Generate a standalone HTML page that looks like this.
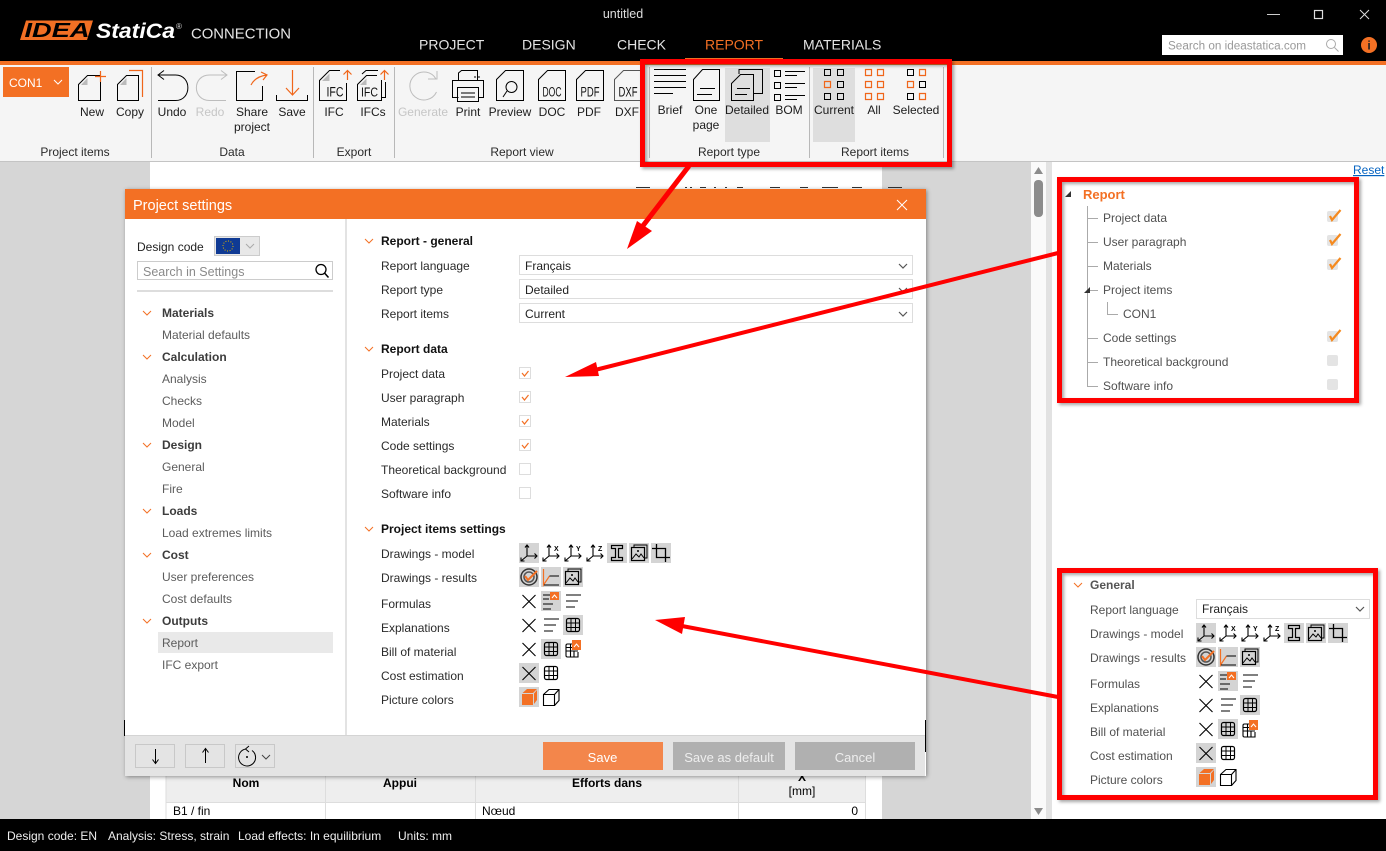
<!DOCTYPE html>
<html lang="en"><head><meta charset="utf-8"><title>IDEA StatiCa Connection</title>
<style>
html,body{margin:0;padding:0;background:#fff;width:1386px;height:851px;overflow:hidden}
svg{display:block;font-family:"Liberation Sans",Arial,sans-serif;font-size:12px}
.l{fill:#2a2a2a}.g{fill:#5c5c5c}.h{fill:#3c3c3c;font-weight:bold}.b{fill:#111;font-weight:bold}.m{text-anchor:middle}
.rb{text-anchor:middle;fill:#1c1c1c}.dis{text-anchor:middle;fill:#c6c6c6}.sec{text-anchor:middle;fill:#2a2a2a}
.p{fill:#505050}.s{fill:none;stroke:#000;stroke-width:1}.o{fill:none;stroke:#f0661a;stroke-width:1.200}.gs{fill:none;stroke:#bdbdbd;stroke-width:1}
.tab{font-size:14px;fill:#e4e4e4}.dt{font-size:13.500px;fill:#111;text-anchor:middle}
.a{fill:#d4d4d4}.chev{fill:none;stroke:#f37024;stroke-width:1}.dd{fill:#fff;stroke:#ddd}.ddc{fill:none;stroke:#555;stroke-width:1.200}
.red{fill:none;stroke:#f00;stroke-width:5}
</style></head><body>
<svg width="1386" height="851" viewBox="0 0 1386 851" xmlns="http://www.w3.org/2000/svg">
<defs>
<filter id="sd" x="-5%" y="-5%" width="110%" height="110%"><feDropShadow dx="1" dy="1" stdDeviation="2" flood-color="#000" flood-opacity=".4"/></filter>
<filter id="rs" x="-5%" y="-5%" width="110%" height="110%"><feDropShadow dx="2" dy="2" stdDeviation="1.500" flood-color="#000" flood-opacity=".35"/></filter>
<symbol id="ax" viewBox="0 0 20 20"><path d="M8 13V2M6 4.500 8 2l2 2.500M8 13H18M15.500 10.500 18 13l-2.500 2.500M8 13 2 18M2 14.500V18H5.500" fill="none" stroke="#000" stroke-width="1.100"/></symbol>
<symbol id="ib" viewBox="0 0 20 20"><path d="M4.500 2.500h11v3h-4v9h4v3h-11v-3h4v-9h-4z" fill="none" stroke="#000" stroke-width="1.200"/></symbol>
<symbol id="im" viewBox="0 0 20 20"><path d="M5 4V2h13v13h-2" fill="none" stroke="#000"/><rect x="2.500" y="4.500" width="13" height="13" fill="none" stroke="#000" stroke-width="1.200"/><path d="M3 16l4-5 3 3 2-3 3 4" fill="none" stroke="#000"/><circle cx="9" cy="8" r="1"/></symbol>
<symbol id="cr" viewBox="0 0 20 20"><path d="M5.500 1V14.500H19M1 5.500H14.500V19" fill="none" stroke="#000" stroke-width="1.300"/></symbol>
<symbol id="tg" viewBox="0 0 20 20"><circle cx="10" cy="10" r="8" fill="none" stroke="#333" stroke-width="1.500"/><circle cx="10" cy="10" r="5" fill="none" stroke="#555" stroke-width="1.500"/><path d="M6 9l3 4 9-9" fill="none" stroke="#f37024" stroke-width="2"/></symbol>
<symbol id="gr" viewBox="0 0 20 20"><path d="M2.500 2V18L8.500 9" fill="none" stroke="#f37024" stroke-width="1.200"/><path d="M8.500 9H18M3 18H18" fill="none" stroke="#000"/></symbol>
<symbol id="fo" viewBox="0 0 20 20"><path d="M2 4h7M2 8h6M2 13h10M2 18h8" fill="none" stroke="#000"/><rect x="9" y="1" width="9" height="8" fill="#f37024"/><path d="M11 7l2.500-3L16 7" fill="none" stroke="#fff"/></symbol>
<symbol id="x" viewBox="0 0 20 20"><path d="M3.500 4 16.500 17M16.500 4 3.500 17" fill="none" stroke="#000" stroke-width="1.100"/></symbol>
<symbol id="li" viewBox="0 0 20 20"><path d="M3 4h15M3 10h12M3 16h9" fill="none" stroke="#000"/></symbol>
<symbol id="gd" viewBox="0 0 20 20"><rect x="3.500" y="3.500" width="13" height="13" rx="2" fill="none" stroke="#000" stroke-width="1.200"/><path d="M8 3.500v13M12.500 3.500v13M3.500 8h13M3.500 12.500h13" fill="none" stroke="#000"/></symbol>
<symbol id="go" viewBox="0 0 20 20"><path d="M9 5H4.500Q3 5 3 6.500V16.500Q3 18 4.500 18H15V13M3 12h12M3 8.500h6M7.500 5v13M11 12v6" fill="none" stroke="#000" stroke-width="1.100"/><rect x="9" y="1" width="9" height="10" fill="#f37024"/><path d="M11 8l2.500-3L16 8" fill="none" stroke="#fff"/></symbol>
<symbol id="co" viewBox="0 0 20 20"><path d="M3 7h11v11H3z" fill="#f37024"/><path d="M3.500 6 8 2h10l-4 4z" fill="#f37024"/><path d="M15 6.500 18 3v10l-3 4z" fill="#f37024"/></symbol>
<symbol id="cw" viewBox="0 0 20 20"><path d="M2.500 7.500h11v11h-11zM2.500 7.500 8 2.500h10v11l-4.500 5M13.500 7.500 18 2.500" fill="none" stroke="#000" stroke-width="1.100"/></symbol>
</defs>

<!-- backgrounds -->
<rect width="1386" height="851" fill="#fff"/>
<rect x="0" y="162" width="1031" height="658" fill="#d6d6d6"/>
<rect x="150" y="162" width="732" height="658" fill="#fff"/>
<rect x="1031" y="162" width="15" height="658" fill="#fafafa"/>
<rect x="1046" y="162" width="6" height="658" fill="#e2e2e2"/>
<path d="M1038.500 167l-4.500 7h9z" fill="#8c8c8c"/><rect x="1034" y="180" width="9" height="37" rx="4" fill="#8c8c8c"/><path d="M1038.500 815l-4.500-7h9z" fill="#8c8c8c"/>

<!-- page behind dialog -->
<path d="M636 187.500h14M685 187.500h2M690 187.500h2M700 187.500h6M714 187.500h2M725 187.500h2M737 187.500h6M770 187.500h10M800 187.500h8M822 187.500h16M852 187.500h10M888 187.500h14" stroke="#333" fill="none"/>
<rect x="124" y="720" width="1" height="16" fill="#000"/>
<rect x="166" y="770" width="700" height="33" fill="#eee"/>
<path d="M166 770V820M325.500 770V820M475.500 770V820M738.500 770V820M865.500 770V820M166 802.500H866" stroke="#ddd" fill="none"/>
<g style="font-weight:bold;fill:#000" text-anchor="middle"><text x="246" y="787">Nom</text><text x="400" y="787">Appui</text><text x="607" y="787">Efforts dans</text><text x="802" y="781">X</text></g>
<text x="802" y="795" text-anchor="middle" fill="#000">[mm]</text>
<text x="173" y="815" fill="#000">B1 / fin</text><text x="482" y="815" fill="#000">Nœud</text><text x="858" y="815" text-anchor="end" fill="#000">0</text>

<!-- top bar -->
<rect width="1386" height="61" fill="#000"/>
<rect y="61" width="1386" height="4" fill="#f37024"/>
<rect x="685" y="58" width="98" height="3" fill="#f37024"/>
<rect y="65" width="1386" height="96" fill="#f5f5f5"/>
<rect y="161" width="1386" height="1" fill="#c4c4c4"/>
<!-- logo -->
<path d="M26 20.500H93L87 40H20Z" fill="#f37024"/>
<text x="24.500" y="37" style="font-size:20px;font-weight:bold;font-style:italic;fill:#000" textLength="65" lengthAdjust="spacingAndGlyphs">IDEA</text>
<text x="96" y="38" style="font-size:21px;font-weight:bold;font-style:italic;fill:#fff" textLength="79" lengthAdjust="spacingAndGlyphs">StatiCa</text>
<text x="176" y="29" style="font-size:8px;fill:#ddd">®</text>
<text x="191" y="38.500" style="font-size:14.500px;fill:#e6e6e6" textLength="100" lengthAdjust="spacingAndGlyphs">CONNECTION</text>
<text x="623" y="18" text-anchor="middle" style="font-size:12.500px;fill:#ddd">untitled</text>
<g class="tabs"><text class="tab" x="419" y="49.500">PROJECT</text><text class="tab" x="522" y="49.500">DESIGN</text><text class="tab" x="617" y="49.500">CHECK</text><text class="tab" x="705" y="49.500" style="fill:#f37024">REPORT</text><text class="tab" x="803" y="49.500">MATERIALS</text></g>
<path d="M1267 14.500h13" stroke="#ccc"/><rect x="1314.500" y="10.500" width="8" height="8" fill="none" stroke="#ddd" stroke-width="1.200"/><path d="M1360 10l9 9M1369 10l-9 9" stroke="#ddd"/>
<rect x="1162" y="35" width="181" height="20" fill="#fff"/>
<text x="1168" y="49.500" style="font-size:11.500px;fill:#999" textLength="138" lengthAdjust="spacingAndGlyphs">Search on ideastatica.com</text>
<circle cx="1331" cy="44" r="4.500" fill="none" stroke="#aaa"/><path d="M1334.500 47.500l4 4" stroke="#aaa"/>
<circle cx="1369" cy="45" r="8" fill="#f37024"/><text x="1369" y="49.500" text-anchor="middle" style="font-weight:bold;fill:#222">i</text>

<!-- ribbon -->
<rect x="3" y="67" width="66" height="30" fill="#f37024"/>
<text x="9" y="87" style="fill:#fff">CON1</text><path d="M54 80l4 4 4-4" fill="none" stroke="#fff"/>
<path d="M151.500 67V158M313.500 67V158M394.500 67V158M649.500 67V158M809.500 67V158M943.500 67V158" stroke="#b8b8b8" fill="none"/>
<rect x="725" y="68" width="45" height="74" fill="#dedede"/><rect x="813" y="68" width="42" height="74" fill="#dedede"/>
<!-- New / Copy -->
<path class="s" d="M78.500 84.500 87.500 75.500H100.500V100.500H78.500Z"/><path d="M81 85h6.500v-7z" fill="#bbb"/><path class="o" d="M95 76.500h11M100.500 71V82"/>
<path class="s" d="M117.500 84.500 126.500 75.500H138.500V100.500H117.500Z"/><path d="M120 85h6.500v-7z" fill="#bbb"/><path class="o" d="M129 70.500H142.500V97"/>
<!-- Undo/Redo -->
<path class="s" d="M164 70.500 158 75l6 4.500M158 75H175.500C192 75 192 100.500 175.500 100.500H158"/>
<path class="gs" d="M221 70.500 227 75l-6 4.500M227 75H209.500C192 75 192 100.500 209.500 100.500H226"/>
<!-- Share -->
<path class="s" d="M255 71.500H236.500V100.500H262.500V86"/><path class="o" d="M251 85C254 79 259 76 267 75M261 72l6 3-4 5"/>
<!-- Save -->
<path class="o" d="M292.500 70V95M286 88l6.500 7 6.500-7"/><path class="s" d="M276.500 95V100.500H307.500V95"/>
<!-- IFC -->
<path class="s" d="M340 70.500H329.500L319.500 80.500V100.500H346.500V83"/><path d="M322 81h7.500v-7.500z" fill="#bbb"/><path class="o" d="M347.500 80V70.500M343.500 74.500l4-4 4 4"/>
<text class="dt" x="335" y="96.500" textLength="17" lengthAdjust="spacingAndGlyphs">IFC</text>
<!-- IFCs -->
<path class="s" d="M377 75.500H366.500L357.500 84.500V100.500H381.500V80"/><path d="M360 85h6.500v-6.500z" fill="#bbb"/><path class="s" d="M362 74 366 70.500H378M385.500 82V97.500H381.500"/><path class="o" d="M384.500 80V70.500M380.500 74.500l4-4 4 4"/>
<text class="dt" x="369.500" y="96.500" style="font-size:12.500px" textLength="17" lengthAdjust="spacingAndGlyphs">IFC</text>
<!-- Generate -->
<path class="gs" d="M436 79A14 14 0 1 0 436.500 92M428 79H437V71" stroke-width="1.200"/>
<!-- Print -->
<path class="s" d="M458.500 80V73L461.500 70.500H477.500V80M458.500 97.500H452.500V80.500H483.500V97.500H478"/><path class="s" d="M457.500 87.500H478.500V101.500H457.500ZM461 93h14M461 97h14"/><path d="M474 77h2M478 77h2" stroke="#000"/>
<!-- Preview -->
<path class="s" d="M496.500 79.500 505.500 70.500H523.500V100.500H496.500Z"/><circle class="s" cx="511.500" cy="87" r="5.500"/><path class="s" d="M507 91 503 97"/>
<!-- DOC PDF DXF -->
<path class="s" d="M538.500 79.500 547.500 70.500H565.500V100.500H538.500Z"/><text class="dt" x="552" y="96.500" textLength="19" lengthAdjust="spacingAndGlyphs">DOC</text>
<path class="s" d="M576.500 79.500 585.500 70.500H603.500V100.500H576.500Z"/><text class="dt" x="590" y="96.500" textLength="19" lengthAdjust="spacingAndGlyphs">PDF</text>
<path class="s" d="M614.500 79.500 623.500 70.500H640.500V100.500H614.500Z" style="stroke:#555"/><text class="dt" x="628" y="96.500" textLength="19" lengthAdjust="spacingAndGlyphs">DXF</text>
<!-- Report type -->
<path class="s" d="M654 69.500h32M654 75.500h32M654 81.500h32M654 87.500h32M654 93.500h19"/>
<path class="s" d="M693.500 79.500 702.500 69.500H719.500V100.500H693.500ZM700 88.500h15M697 94.500h15"/>
<path class="s" d="M739 74V69.500H762.500V93.500H754"/><path class="s" d="M731.500 83.500 740.500 74.500H753.500V100.500H731.500ZM737 88.500h13M735 94.500h12"/>
<path class="s" d="M774.500 70.500h6v6h-6zM774.500 82.500h6v6h-6zM774.500 94.500h6v6h-6zM785 71.500h20M785 75.500h12M785 83.500h20M785 87.500h12M785 95.500h20M785 99.500h12"/>
<!-- Report items -->
<path class="s" d="M824.500 69.500h6v6h-6zM837.500 69.500h6v6h-6zM837.500 81.500h6v6h-6zM824.500 93.500h6v6h-6zM837.500 93.500h6v6h-6z"/><path class="o" d="M824.500 81.500h6v6h-6z"/>
<path class="o" d="M865.500 69.500h6v6h-6zM877.500 69.500h6v6h-6zM865.500 81.500h6v6h-6zM877.500 81.500h6v6h-6zM865.500 93.500h6v6h-6zM877.500 93.500h6v6h-6z"/>
<path class="s" d="M907.500 69.500h6v6h-6zM919.500 81.500h6v6h-6zM907.500 93.500h6v6h-6z"/><path class="o" d="M919.500 69.500h6v6h-6zM907.500 81.500h6v6h-6zM919.500 93.500h6v6h-6z"/>
<!-- ribbon labels -->
<g>
<text class="rb" x="92" y="116">New</text><text class="rb" x="130" y="116">Copy</text><text class="rb" x="172" y="116">Undo</text><text class="dis" x="210" y="116">Redo</text>
<text class="rb" x="252" y="116">Share</text><text class="rb" x="252" y="131">project</text><text class="rb" x="292" y="116">Save</text><text class="rb" x="334" y="116">IFC</text><text class="rb" x="373" y="116">IFCs</text>
<text class="dis" x="423" y="116">Generate</text><text class="rb" x="468" y="116">Print</text><text class="rb" x="510" y="116">Preview</text><text class="rb" x="552" y="116">DOC</text><text class="rb" x="589" y="116">PDF</text><text class="rb" x="627" y="116">DXF</text>
<text class="rb" x="670" y="114">Brief</text><text class="rb" x="706" y="114">One</text><text class="rb" x="706" y="129">page</text><text class="rb" x="747" y="114">Detailed</text><text class="rb" x="789" y="114">BOM</text><text class="rb" x="834" y="114">Current</text><text class="rb" x="874" y="114">All</text><text class="rb" x="916" y="114">Selected</text>
<text class="sec" x="75" y="156">Project items</text><text class="sec" x="232" y="156">Data</text><text class="sec" x="354" y="156">Export</text><text class="sec" x="522" y="156">Report view</text><text class="sec" x="729" y="156">Report type</text><text class="sec" x="875" y="156">Report items</text>
</g>

<!-- right panel tree -->
<text x="1353" y="174" style="fill:#0563c1;text-decoration:underline">Reset</text>
<path d="M1071 191v6h-6z" fill="#333"/>
<text x="1083" y="199" style="font-size:13px;font-weight:bold;fill:#f37024">Report</text>
<path d="M1087.500 206V386.500H1098M1087.500 218.500H1098M1087.500 242.500H1098M1087.500 266.500H1098M1087.500 290.500H1098M1087.500 338.500H1098M1087.500 362.500H1098M1107.500 302V314.500H1118" stroke="#aaa" fill="none"/>
<path d="M1090 287v6h-6z" fill="#333"/>
<g><text class="p" x="1103" y="222">Project data</text><text class="p" x="1103" y="246">User paragraph</text><text class="p" x="1103" y="270">Materials</text><text class="p" x="1103" y="294">Project items</text><text class="p" x="1123" y="318">CON1</text><text class="p" x="1103" y="342">Code settings</text><text class="p" x="1103" y="366">Theoretical background</text><text class="p" x="1103" y="390">Software info</text></g>
<g fill="#e4e4e4"><rect x="1327" y="211" width="11" height="11" rx="2"/><rect x="1327" y="235" width="11" height="11" rx="2"/><rect x="1327" y="259" width="11" height="11" rx="2"/><rect x="1327" y="331" width="11" height="11" rx="2"/><rect x="1327" y="355" width="11" height="11" rx="2"/><rect x="1327" y="379" width="11" height="11" rx="2"/></g>
<path fill="none" stroke="#f58a1f" stroke-width="2.200" d="M1330 216l2 4 8.500-10M1330 240l2 4 8.500-10M1330 264l2 4 8.500-10M1330 336l2 4 8.500-10"/>

<!-- General panel -->
<path class="chev" d="M1074 583l4 4 4-4"/>
<text x="1090" y="589" class="h" style="fill:#555">General</text>
<g><text class="p" x="1090" y="614">Report language</text><text class="p" x="1090" y="638">Drawings - model</text><text class="p" x="1090" y="662">Drawings - results</text><text class="p" x="1090" y="688">Formulas</text><text class="p" x="1090" y="712">Explanations</text><text class="p" x="1090" y="736">Bill of material</text><text class="p" x="1090" y="760">Cost estimation</text><text class="p" x="1090" y="784">Picture colors</text></g>
<rect class="dd" x="1196.500" y="599.500" width="173" height="19"/><text x="1202" y="613" fill="#222">Français</text><path class="ddc" d="M1356 607l4 4 4-4"/>
<g transform="translate(1196 623)">
<rect width="20" height="20" class="a"/><use href="#ax" width="20" height="20"/>
<use href="#ax" x="22" width="20" height="20"/><text x="35" y="8" style="font-size:7px;font-weight:bold">X</text>
<use href="#ax" x="44" width="20" height="20"/><text x="57" y="8" style="font-size:7px;font-weight:bold">Y</text>
<use href="#ax" x="66" width="20" height="20"/><text x="79" y="8" style="font-size:7px;font-weight:bold">Z</text>
<rect x="88" width="20" height="20" class="a"/><use href="#ib" x="88" width="20" height="20"/>
<rect x="110" width="20" height="20" class="a"/><use href="#im" x="110" width="20" height="20"/>
<rect x="132" width="20" height="20" class="a"/><use href="#cr" x="132" width="20" height="20"/>
<rect y="24" width="20" height="20" class="a"/><use href="#tg" y="24" width="20" height="20"/>
<rect x="22" y="24" width="20" height="20" class="a"/><use href="#gr" x="22" y="24" width="20" height="20"/>
<rect x="44" y="24" width="20" height="20" class="a"/><use href="#im" x="44" y="24" width="20" height="20"/>
<use href="#x" y="48" width="20" height="20"/><rect x="22" y="48" width="20" height="20" class="a"/><use href="#fo" x="22" y="48" width="20" height="20"/><use href="#li" x="44" y="48" width="20" height="20"/>
<use href="#x" y="72" width="20" height="20"/><use href="#li" x="22" y="72" width="20" height="20"/><rect x="44" y="72" width="20" height="20" class="a"/><use href="#gd" x="44" y="72" width="20" height="20"/>
<use href="#x" y="96" width="20" height="20"/><rect x="22" y="96" width="20" height="20" class="a"/><use href="#gd" x="22" y="96" width="20" height="20"/><use href="#go" x="44" y="96" width="20" height="20"/>
<rect y="120" width="20" height="20" class="a"/><use href="#x" y="120" width="20" height="20"/><use href="#gd" x="22" y="120" width="20" height="20"/>
<rect y="144" width="20" height="20" class="a"/><use href="#co" y="144" width="20" height="20"/><use href="#cw" x="22" y="144" width="20" height="20"/>
</g>

<!-- status bar -->
<rect y="819" width="1386" height="32" fill="#000"/>
<g><text x="7" y="840" fill="#eee">Design code: EN</text><text x="108" y="840" fill="#eee">Analysis: Stress, strain</text><text x="238" y="840" fill="#eee">Load effects: In equilibrium</text><text x="398" y="840" fill="#eee">Units: mm</text></g>

<!-- dialog -->
<g filter="url(#sd)"><rect x="125" y="189" width="801" height="587" fill="#fff"/></g>
<rect x="925" y="720" width="1" height="32" fill="#000"/>
<rect x="125" y="189" width="801" height="30" fill="#f37024"/>
<text x="133" y="210" style="font-size:14.500px;fill:#fff">Project settings</text>
<path d="M897 200l10 10M907 200l-10 10" stroke="#fff" fill="none"/>
<rect x="345" y="219" width="2" height="517" fill="#e3e3e3"/>
<rect x="125" y="735" width="800" height="41" fill="#e4e4e4"/>
<rect x="125" y="735" width="800" height="1" fill="#d4d4d4"/>
<text x="137" y="251" fill="#222">Design code</text>
<rect x="214.500" y="236.500" width="45" height="19" fill="#e8e8e8" stroke="#ccc"/><rect x="216" y="238" width="24" height="16" fill="#0f3a94"/><circle cx="228" cy="246" r="5" fill="none" stroke="#e0b400" stroke-dasharray="1 1.600"/><path d="M246 244l4 4 4-4" fill="none" stroke="#aaa"/>
<rect x="137.500" y="261.500" width="195" height="18" fill="#fff" stroke="#ccc"/><text x="143" y="276" style="font-size:12.500px;fill:#8a8a8a">Search in Settings</text>
<circle cx="321" cy="269.500" r="5" fill="none" stroke="#000" stroke-width="1.300"/><path d="M324.500 273l4 4.500" stroke="#000" stroke-width="1.500"/>
<rect x="137" y="290" width="196" height="2" fill="#ddd"/>
<rect x="158" y="632" width="175" height="21" fill="#e9e9e9"/>
<path class="chev" d="M143 311l4 4 4-4M143 355l4 4 4-4M143 443l4 4 4-4M143 509l4 4 4-4M143 553l4 4 4-4M143 619l4 4 4-4"/>
<g>
<text class="h" x="162" y="317">Materials</text><text class="g" x="162" y="339">Material defaults</text><text class="h" x="162" y="361">Calculation</text><text class="g" x="162" y="383">Analysis</text><text class="g" x="162" y="405">Checks</text><text class="g" x="162" y="427">Model</text><text class="h" x="162" y="449">Design</text><text class="g" x="162" y="471">General</text><text class="g" x="162" y="493">Fire</text><text class="h" x="162" y="515">Loads</text><text class="g" x="162" y="537">Load extremes limits</text><text class="h" x="162" y="559">Cost</text><text class="g" x="162" y="581">User preferences</text><text class="g" x="162" y="603">Cost defaults</text><text class="h" x="162" y="625">Outputs</text><text class="g" x="162" y="647">Report</text><text class="g" x="162" y="669">IFC export</text>
</g>
<path class="chev" d="M365 239l4 4 4-4M365 347l4 4 4-4M365 527l4 4 4-4"/>
<text class="b" x="381" y="245">Report - general</text><text class="b" x="381" y="353">Report data</text><text class="b" x="381" y="533">Project items settings</text>
<g>
<text class="l" x="381" y="270">Report language</text><text class="l" x="381" y="294">Report type</text><text class="l" x="381" y="318">Report items</text>
<text class="l" x="381" y="378">Project data</text><text class="l" x="381" y="402">User paragraph</text><text class="l" x="381" y="426">Materials</text><text class="l" x="381" y="450">Code settings</text><text class="l" x="381" y="474">Theoretical background</text><text class="l" x="381" y="498">Software info</text>
<text class="l" x="381" y="558">Drawings - model</text><text class="l" x="381" y="582">Drawings - results</text><text class="l" x="381" y="608">Formulas</text><text class="l" x="381" y="632">Explanations</text><text class="l" x="381" y="656">Bill of material</text><text class="l" x="381" y="680">Cost estimation</text><text class="l" x="381" y="704">Picture colors</text>
</g>
<rect class="dd" x="519.500" y="255.500" width="393" height="19"/><rect class="dd" x="519.500" y="279.500" width="393" height="19"/><rect class="dd" x="519.500" y="303.500" width="393" height="19"/>
<text x="525" y="270" fill="#222">Français</text><text x="525" y="294" fill="#222">Detailed</text><text x="525" y="318" fill="#222">Current</text>
<path class="ddc" d="M899 264l4 4 4-4M899 288l4 4 4-4M899 312l4 4 4-4"/>
<g fill="#fff" stroke="#ddd"><rect x="519.500" y="367.500" width="11" height="11"/><rect x="519.500" y="391.500" width="11" height="11"/><rect x="519.500" y="415.500" width="11" height="11"/><rect x="519.500" y="439.500" width="11" height="11"/><rect x="519.500" y="463.500" width="11" height="11"/><rect x="519.500" y="487.500" width="11" height="11"/></g>
<path d="M522 373l2.500 3 4-5M522 397l2.500 3 4-5M522 421l2.500 3 4-5M522 445l2.500 3 4-5" fill="none" stroke="#f37024" stroke-width="1.200"/>
<g transform="translate(519 543)">
<rect width="20" height="20" class="a"/><use href="#ax" width="20" height="20"/>
<use href="#ax" x="22" width="20" height="20"/><text x="35" y="8" style="font-size:7px;font-weight:bold">X</text>
<use href="#ax" x="44" width="20" height="20"/><text x="57" y="8" style="font-size:7px;font-weight:bold">Y</text>
<use href="#ax" x="66" width="20" height="20"/><text x="79" y="8" style="font-size:7px;font-weight:bold">Z</text>
<rect x="88" width="20" height="20" class="a"/><use href="#ib" x="88" width="20" height="20"/>
<rect x="110" width="20" height="20" class="a"/><use href="#im" x="110" width="20" height="20"/>
<rect x="132" width="20" height="20" class="a"/><use href="#cr" x="132" width="20" height="20"/>
<rect y="24" width="20" height="20" class="a"/><use href="#tg" y="24" width="20" height="20"/>
<rect x="22" y="24" width="20" height="20" class="a"/><use href="#gr" x="22" y="24" width="20" height="20"/>
<rect x="44" y="24" width="20" height="20" class="a"/><use href="#im" x="44" y="24" width="20" height="20"/>
<use href="#x" y="48" width="20" height="20"/><rect x="22" y="48" width="20" height="20" class="a"/><use href="#fo" x="22" y="48" width="20" height="20"/><use href="#li" x="44" y="48" width="20" height="20"/>
<use href="#x" y="72" width="20" height="20"/><use href="#li" x="22" y="72" width="20" height="20"/><rect x="44" y="72" width="20" height="20" class="a"/><use href="#gd" x="44" y="72" width="20" height="20"/>
<use href="#x" y="96" width="20" height="20"/><rect x="22" y="96" width="20" height="20" class="a"/><use href="#gd" x="22" y="96" width="20" height="20"/><use href="#go" x="44" y="96" width="20" height="20"/>
<rect y="120" width="20" height="20" class="a"/><use href="#x" y="120" width="20" height="20"/><use href="#gd" x="22" y="120" width="20" height="20"/>
<rect y="144" width="20" height="20" class="a"/><use href="#co" y="144" width="20" height="20"/><use href="#cw" x="22" y="144" width="20" height="20"/>
</g>
<!-- dialog footer -->
<g fill="none" stroke="#c8c8c8"><rect x="135.500" y="744.500" width="39" height="23"/><rect x="185.500" y="744.500" width="39" height="23"/><rect x="235.500" y="744.500" width="39" height="23"/></g>
<path d="M155.500 749V763M152.500 759.500l3 4 3-4M205.500 763V749M202.500 752.500l3-4 3 4" fill="none" stroke="#000"/>
<path d="M252 750.500A8.500 8.500 0 1 1 246 749M249 746l-3.500 3 3.500 3" fill="none" stroke="#000"/><circle cx="247" cy="757" r="1"/><path d="M262 755l4 4 4-4" fill="none" stroke="#444"/>
<rect x="543" y="742" width="120" height="28" fill="#f3864b"/><rect x="673" y="742" width="112" height="28" fill="#b0b0b0"/><rect x="795" y="742" width="120" height="28" fill="#b0b0b0"/>
<g text-anchor="middle" style="font-size:13px"><text x="602.500" y="762" fill="#fff">Save</text><text x="729" y="762" fill="#eee">Save as default</text><text x="855" y="762" fill="#eee">Cancel</text></g>

<!-- annotations -->
<g filter="url(#rs)">
<rect class="red" x="642.500" y="61.500" width="307" height="103"/>
<rect class="red" x="1059.500" y="179.500" width="297" height="221"/>
<rect class="red" x="1059.500" y="570.500" width="316" height="227"/>
</g>
<path d="M689 166 642 227" stroke="#f00" stroke-width="5" fill="none"/><path d="M627 249 637 221 652 231Z" fill="#f00"/>
<path d="M1058 253 595 370" stroke="#f00" stroke-width="4" fill="none"/><path d="M565 377 596 362 599 376Z" fill="#f00"/>
<path d="M1058 697 682 626" stroke="#f00" stroke-width="4" fill="none"/><path d="M655 620 685 617 682 634Z" fill="#f00"/>
</svg>
</body></html>
